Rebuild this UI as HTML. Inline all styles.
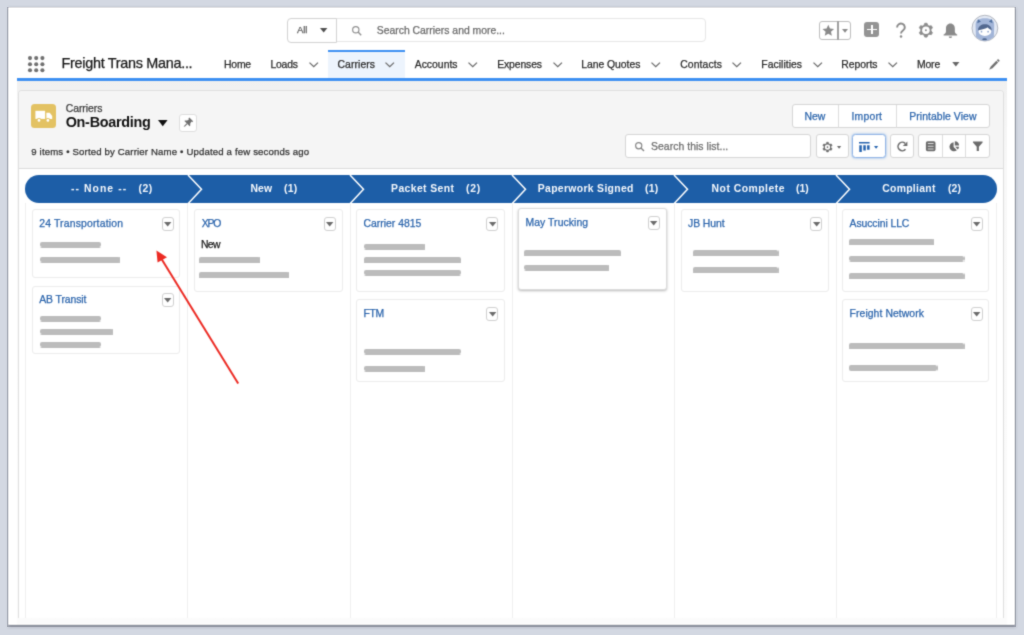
<!DOCTYPE html>
<html lang="en"><head><meta charset="utf-8"><title>Carriers | Salesforce</title>
<style>
html,body{margin:0;padding:0}
body{width:1024px;height:635px;overflow:hidden;background:#d3d8e2;font-family:"Liberation Sans",sans-serif;position:relative}
div,span,svg{box-sizing:border-box}
.t{position:absolute;white-space:nowrap;line-height:1;-webkit-text-stroke:.25px}
svg{position:absolute;overflow:visible}
.btn{background:#fff;border:1px solid #d6d6d6;border-radius:3px}
.card{background:#fff;border:1px solid #ececec;border-radius:3px}
.dd{background:#fff;border:1px solid #d0d0d0;border-radius:3px}
.bar{background:#bcbcbc;border-radius:2px;filter:url(#soft)}
.sep{background:#efefef}
#app{position:absolute;left:0;top:0;width:1024px;height:635px;filter:url(#soft)}
</style></head><body><svg width="0" height="0" style="position:absolute"><defs><filter id="soft" x="0" y="0" width="100%" height="100%" color-interpolation-filters="sRGB"><feConvolveMatrix order="3" kernelMatrix=".025 .1 .025 .1 .5 .1 .025 .1 .025" edgeMode="duplicate" preserveAlpha="true"/></filter></defs></svg><div id="app">
<div style="position:absolute;left:8px;top:7.2px;width:1007px;height:617.4px;background:#fff;box-shadow:0 1px 0 1px rgba(70,74,88,.27),0 1.500px 3px .5px rgba(58,62,74,.33)"></div>
<div style="position:absolute;left:17px;top:81px;width:990px;height:544px;background:linear-gradient(#f0f0f0,#f3f3f3 20px,#f8f8f8 90px,#fbfbfb)"></div>
<div style="position:absolute;left:336px;top:18px;width:370px;height:24px;background:#fff;border:1px solid #e6e6e6;border-radius:0 4px 4px 0"></div>
<div style="position:absolute;left:287px;top:18px;width:50px;height:24.5px;background:#fff;border:1px solid #d2d2d2;border-radius:4px 0 0 4px"></div>
<span class="t" style="left:297.00px;top:25.00px;font-size:9.6px;letter-spacing:-0.133px;color:#5e5e5e;">All</span>
<svg style="left:319.700px;top:28.100px" width="7.400" height="4.500" viewBox="0 0 7.400 4.500"><path d="M0 0h7.400L3.700 4.500z" fill="#505050"/></svg>
<svg style="left:352px;top:25.500px" width="9.600" height="9.600" viewBox="0 0 9.600 9.600"><circle cx="3.800" cy="3.800" r="3.150" fill="none" stroke="#909090" stroke-width="1.150"/><path d="M6.100 6.100L9.200 9.200" stroke="#909090" stroke-width="1.350"/></svg>
<span class="t" style="left:376.80px;top:26.00px;font-size:10.4px;letter-spacing:-0.004px;color:#6b6b6b;">Search Carriers and more...</span>
<div style="position:absolute;left:819.3px;top:20.6px;width:31.90000000000009px;height:19.0px;background:#fff;border:1px solid #bdbdbd;border-radius:3px"></div>
<div style="position:absolute;left:837px;top:20.6px;width:1.5px;height:19.0px;background:#a0a0a0"></div>
<svg style="left:822.400px;top:24px" width="12.600" height="12.600" viewBox="0 0 24 24"><path d="M12 1.5l3.2 7.2 7.8.8-5.9 5.2 1.7 7.7L12 18.4l-6.8 4 1.7-7.7L1 9.5l7.8-.8z" fill="#8a8a8a"/></svg>
<svg style="left:842px;top:28.700px" width="6" height="4" viewBox="0 0 6 4"><path d="M0 0h6L3 3.8z" fill="#8a8a8a"/></svg>
<div style="position:absolute;left:864.2px;top:21.5px;width:15.299999999999955px;height:15.5px;background:#949494;border-radius:3px"></div>
<div style="position:absolute;left:871.1px;top:24.6px;width:1.5px;height:9.299999999999997px;background:#fff"></div>
<div style="position:absolute;left:867.1px;top:28.5px;width:9.5px;height:1.5px;background:#fff"></div>
<svg style="left:896px;top:22.800px" width="10" height="15" viewBox="0 0 10 15"><path d="M1.100 4.500A3.850 3.700 0 1 1 7.200 7.300C5.700 8.400 5 9 5 10.600" fill="none" stroke="#8a8a8a" stroke-width="1.950"/><circle cx="5" cy="13.600" r="1.250" fill="#8a8a8a"/></svg>
<svg style="left:0;top:0" width="1024" height="635"><path d="M927.84 25.40L927.00 23.29L924.80 23.29L923.96 25.40L922.71 26.12L920.46 25.79L919.36 27.69L920.77 29.48L920.77 30.92L919.36 32.71L920.46 34.61L922.71 34.28L923.96 35.00L924.80 37.11L927.00 37.11L927.84 35.00L929.09 34.28L931.34 34.61L932.44 32.71L931.03 30.92L931.03 29.48L932.44 27.69L931.34 25.79L929.09 26.12z" fill="#8c8c8c" stroke="#8c8c8c" stroke-width="0.84" stroke-linejoin="round"/><circle cx="925.9" cy="30.2" r="3.78" fill="#fff"/><circle cx="925.9" cy="30.2" r="0.98" fill="#8c8c8c"/></svg>
<svg style="left:943.400px;top:22.600px" width="14.800" height="15.200" viewBox="0 0 24 24.600"><path fill="#8a8a8a" d="M12 .8C7.300.8 4.800 4.600 4.800 9v4.800c0 2.200-1.600 3.700-3.800 4.700v1.700h22v-1.700c-2.200-1-3.800-2.500-3.800-4.700V9C19.200 4.600 16.700.8 12 .8zM9.300 21.800a2.700 2.700 0 005.400 0z"/></svg>
<svg style="left:0;top:0" width="1024" height="635">
<defs><clipPath id="av"><circle cx="984.900" cy="28.150" r="12.400"/></clipPath></defs>
<circle cx="984.900" cy="28.150" r="12.900" fill="#e3e9f4" stroke="#b4b8c0" stroke-width="1"/>
<g clip-path="url(#av)">
<path d="M975.600 24.500C975.600 20.500 978.500 18.300 984.900 18.300S994.200 20.500 994.200 24.500L993.800 42H976z" fill="#a2b5d8"/>
<path d="M977.300 23.300l.6-4 3.100 2.300zM992.500 23.300l-.6-4-3.100 2.300z" fill="#50709f"/>
<ellipse cx="984.900" cy="31.400" rx="6.300" ry="4.500" fill="#fff"/>
<path d="M978 30.200C978.300 26.300 981.500 24.300 984.900 24.300S991.500 26.300 991.800 30.200C990 29.600 988.500 28.500 987.800 27.300 986 28.600 982 30 978 30.200z" fill="#52688f"/>
<circle cx="981.500" cy="31.700" r=".85" fill="#8fa5cc"/><circle cx="988.100" cy="31.700" r=".85" fill="#8fa5cc"/>
<ellipse cx="984.600" cy="39.400" rx="2.300" ry="1.200" fill="#4f678f"/>
</g></svg>
<svg style="left:0;top:0" width="1024" height="635"><g fill="#707070"><circle cx="30.0" cy="58.1" r="2.050"/><circle cx="36.2" cy="58.1" r="2.050"/><circle cx="42.4" cy="58.1" r="2.050"/><circle cx="30.0" cy="64.2" r="2.050"/><circle cx="36.2" cy="64.2" r="2.050"/><circle cx="42.4" cy="64.2" r="2.050"/><circle cx="30.0" cy="70.3" r="2.050"/><circle cx="36.2" cy="70.3" r="2.050"/><circle cx="42.4" cy="70.3" r="2.050"/></g></svg>
<span class="t" style="left:61.60px;top:56.00px;font-size:14.4px;letter-spacing:-0.288px;color:#1a1a1a;">Freight Trans Mana...</span>
<div style="position:absolute;left:327.7px;top:50px;width:77.40000000000003px;height:29px;background:#edf4fd"></div>
<div style="position:absolute;left:327.7px;top:49.6px;width:77.40000000000003px;height:2.6000000000000014px;background:#3e90f2"></div>
<div style="position:absolute;left:17px;top:78.3px;width:990px;height:2.799999999999997px;background:#3e90f2"></div>
<span class="t" style="left:224.10px;top:60.00px;font-size:10.4px;letter-spacing:-0.249px;color:#2b2b2b;">Home</span>
<span class="t" style="left:270.50px;top:60.00px;font-size:10.4px;letter-spacing:-0.235px;color:#2b2b2b;">Loads</span>
<svg style="left:308.6px;top:62px" width="9.5" height="5.5" viewBox="0 0 9.5 5.5"><path d="M.5.600l4.250 4.100L9 .6" fill="none" stroke="#6a6a6a" stroke-width="1.250"/></svg>
<span class="t" style="left:337.50px;top:60.00px;font-size:10.4px;letter-spacing:0.074px;color:#2b2b2b;">Carriers</span>
<svg style="left:385.4px;top:62px" width="9.5" height="5.5" viewBox="0 0 9.5 5.5"><path d="M.5.600l4.250 4.100L9 .6" fill="none" stroke="#6a6a6a" stroke-width="1.250"/></svg>
<span class="t" style="left:414.70px;top:60.00px;font-size:10.4px;letter-spacing:0.018px;color:#2b2b2b;">Accounts</span>
<svg style="left:468px;top:62px" width="9.5" height="5.5" viewBox="0 0 9.5 5.5"><path d="M.5.600l4.250 4.100L9 .6" fill="none" stroke="#6a6a6a" stroke-width="1.250"/></svg>
<span class="t" style="left:497.20px;top:60.00px;font-size:10.4px;letter-spacing:-0.111px;color:#2b2b2b;">Expenses</span>
<svg style="left:552.5px;top:62px" width="9.5" height="5.5" viewBox="0 0 9.5 5.5"><path d="M.5.600l4.250 4.100L9 .6" fill="none" stroke="#6a6a6a" stroke-width="1.250"/></svg>
<span class="t" style="left:581.20px;top:60.00px;font-size:10.4px;letter-spacing:-0.026px;color:#2b2b2b;">Lane Quotes</span>
<svg style="left:650.9px;top:62px" width="9.5" height="5.5" viewBox="0 0 9.5 5.5"><path d="M.5.600l4.250 4.100L9 .6" fill="none" stroke="#6a6a6a" stroke-width="1.250"/></svg>
<span class="t" style="left:680.20px;top:60.00px;font-size:10.4px;letter-spacing:0.109px;color:#2b2b2b;">Contacts</span>
<svg style="left:732.4px;top:62px" width="9.5" height="5.5" viewBox="0 0 9.5 5.5"><path d="M.5.600l4.250 4.100L9 .6" fill="none" stroke="#6a6a6a" stroke-width="1.250"/></svg>
<span class="t" style="left:761.30px;top:60.00px;font-size:10.4px;letter-spacing:0.038px;color:#2b2b2b;">Facilities</span>
<svg style="left:812.5px;top:62px" width="9.5" height="5.5" viewBox="0 0 9.5 5.5"><path d="M.5.600l4.250 4.100L9 .6" fill="none" stroke="#6a6a6a" stroke-width="1.250"/></svg>
<span class="t" style="left:841.20px;top:60.00px;font-size:10.4px;letter-spacing:-0.018px;color:#2b2b2b;">Reports</span>
<svg style="left:888.2px;top:62px" width="9.5" height="5.5" viewBox="0 0 9.5 5.5"><path d="M.5.600l4.250 4.100L9 .6" fill="none" stroke="#6a6a6a" stroke-width="1.250"/></svg>
<span class="t" style="left:916.90px;top:60.00px;font-size:10.4px;letter-spacing:-0.130px;color:#2b2b2b;">More</span>
<svg style="left:951.9px;top:62px" width="7.7" height="4.500" viewBox="0 0 8 5"><path d="M0 0h8L4 5z" fill="#666"/></svg>
<svg style="left:0;top:0" width="1024" height="635"><g transform="translate(993.900 65) rotate(45)" fill="#737373"><path d="M-1.250 -7.100h2.500v1.700h-2.500zM-1.250 -4.700h2.500v7.900L0 6.800l-1.250-3.600z"/></g></svg>
<div style="position:absolute;left:17.7px;top:90.3px;width:986.0px;height:527.7px;background:#fff;border:1px solid #dfdfdf;border-bottom:none;border-radius:4px 4px 0 0"></div>
<div style="position:absolute;left:18.7px;top:91.3px;width:984.0px;height:76.50000000000001px;background:#f5f5f5;border-radius:3px 3px 0 0"></div>
<div style="position:absolute;left:18.7px;top:167.6px;width:984.0px;height:1.0px;background:#dcdcdc"></div>
<div style="position:absolute;left:31px;top:103.7px;width:25.1px;height:24.60000000000001px;background:#e3c263;border-radius:3.500px"></div>
<svg style="left:0;top:0" width="1024" height="635"><g fill="#fff">
<path d="M35.400 110.800h9.700v8.100h-9.700z"/><path d="M46.400 112.700h3.300l2.500 3.200v3h-5.800z"/>
<circle cx="39" cy="120.300" r="2.300" fill="#e3c263"/><circle cx="39" cy="120.400" r="1.350"/>
<circle cx="47.900" cy="120.300" r="2.300" fill="#e3c263"/><circle cx="47.900" cy="120.400" r="1.350"/>
</g></svg>
<span class="t" style="left:65.70px;top:104.00px;font-size:10.4px;letter-spacing:-0.026px;color:#3c3c3c;">Carriers</span>
<span class="t" style="left:65.70px;top:115.00px;font-size:14.4px;letter-spacing:-0.278px;color:#111;font-weight:bold;-webkit-text-stroke:0;">On-Boarding</span>
<svg style="left:158px;top:119.700px" width="9.600" height="6.200" viewBox="0 0 9.600 6.200"><path d="M0 0h9.600L4.800 6.200z" fill="#111"/></svg>
<div class="btn" style="position:absolute;left:178.6px;top:113.9px;width:18.200000000000017px;height:18.19999999999999px;border-color:#dedede"></div>
<svg style="left:0;top:0" width="1024" height="635"><g transform="translate(188 122.700) rotate(45) scale(.86)" fill="#707070"><path d="M-3.100 -5.300h6.200v1.500h-1.100l.5 2.600 1.800 1.900v.9h-8.600v-.9l1.800-1.900.5-2.600h-1.100z"/><path d="M-.65 1.600h1.300v3.500l-.65 2.100-.65-2.100z"/></g></svg>
<span class="t" style="left:31.30px;top:147.00px;font-size:9.6px;letter-spacing:0.157px;color:#333;">9 items • Sorted by Carrier Name • Updated a few seconds ago</span>
<div class="btn" style="position:absolute;left:791.5px;top:103.7px;width:198.5px;height:24.499999999999986px;"></div>
<div style="position:absolute;left:838px;top:104.5px;width:1px;height:23.0px;background:#dcdcdc"></div>
<div style="position:absolute;left:896px;top:104.5px;width:1px;height:23.0px;background:#dcdcdc"></div>
<span class="t" style="left:804.60px;top:112.00px;font-size:10.4px;letter-spacing:-0.066px;color:#2c65ac;">New</span>
<span class="t" style="left:851.50px;top:112.00px;font-size:10.4px;letter-spacing:0.205px;color:#2c65ac;">Import</span>
<span class="t" style="left:909.30px;top:112.00px;font-size:10.4px;letter-spacing:0.068px;color:#2c65ac;">Printable View</span>
<div class="btn" style="position:absolute;left:625.3px;top:134.2px;width:186.20000000000005px;height:24.200000000000017px;"></div>
<svg style="left:635.200px;top:141.600px" width="9.400" height="9.400" viewBox="0 0 9.600 9.600"><circle cx="3.800" cy="3.800" r="3.150" fill="none" stroke="#868686" stroke-width="1.200"/><path d="M6.100 6.100L9.200 9.200" stroke="#868686" stroke-width="1.400"/></svg>
<span class="t" style="left:651.00px;top:142.00px;font-size:10.4px;letter-spacing:0.056px;color:#6e6e6e;">Search this list...</span>
<div class="btn" style="position:absolute;left:815.6px;top:134.3px;width:33.0px;height:23.899999999999977px;"></div>
<svg style="left:0;top:0" width="1024" height="635"><path d="M828.82 143.83L828.27 142.26L826.73 142.26L826.18 143.83L825.33 144.32L823.69 144.02L822.93 145.34L824.01 146.61L824.01 147.59L822.93 148.86L823.69 150.18L825.33 149.88L826.18 150.37L826.73 151.94L828.27 151.94L828.82 150.37L829.67 149.88L831.31 150.18L832.07 148.86L830.99 147.59L830.99 146.61L832.07 145.34L831.31 144.02L829.67 144.32z" fill="#6b6b6b" stroke="#6b6b6b" stroke-width="0.59" stroke-linejoin="round"/><circle cx="827.5" cy="147.1" r="2.65" fill="#fff"/><circle cx="827.5" cy="147.1" r="0.88" fill="#6b6b6b"/></svg>
<svg style="left:837.100px;top:145.700px" width="4.200" height="2.700" viewBox="0 0 4.200 2.700"><path d="M0 0h4.200L2.100 2.700z" fill="#6b6b6b"/></svg>
<div style="position:absolute;left:852.3px;top:134px;width:33.700000000000045px;height:24.400000000000006px;background:#fff;border:1px solid #92b5e6;border-radius:3.500px;box-shadow:0 0 2.500px rgba(80,145,225,.7)"></div>
<svg style="left:0;top:0" width="1024" height="635"><path fill="#2462ae" d="M859 141.900h10.600v1.700H859zM859.300 145.200h2.500v6.800h-2.500zM863.300 145.200h2.500v5.300h-2.500zM867.100 145.200h2.500v4.500h-2.500z"/></svg>
<svg style="left:874.300px;top:145.700px" width="4.200" height="2.700" viewBox="0 0 4.200 2.700"><path d="M0 0h4.200L2.100 2.700z" fill="#2462ae"/></svg>
<div class="btn" style="position:absolute;left:890.1px;top:134.3px;width:23.899999999999977px;height:23.899999999999977px;"></div>
<svg style="left:0;top:0" width="1024" height="635"><path d="M905.500 149.300A4.250 4.250 0 1 1 905.100 143.300" fill="none" stroke="#6b6b6b" stroke-width="1.600"/><path d="M907.400 141.400v4.600h-4.600z" fill="#6b6b6b"/></svg>
<div class="btn" style="position:absolute;left:917.6px;top:134.3px;width:72.10000000000002px;height:23.899999999999977px;"></div>
<div style="position:absolute;left:941.6px;top:135px;width:1.0px;height:22.5px;background:#dcdcdc"></div>
<div style="position:absolute;left:965.4px;top:135px;width:1.0px;height:22.5px;background:#dcdcdc"></div>
<svg style="left:0;top:0" width="1024" height="635"><rect x="925.900" y="141.300" width="9.600" height="9.900" rx="1.600" fill="#6b6b6b"/><path d="M927.800 143h5.800v1.100h-5.800zM927.800 145.700h5.800v1.100h-5.800zM927.800 148.400h5.800v1.100h-5.800z" fill="#dcdcdc"/></svg>
<svg style="left:0;top:0" width="1024" height="635"><g fill="#6b6b6b"><path d="M953.600 142.300v4.700l3.300 3.200A4.500 4.500 0 1 1 953.600 142.300z"/><path d="M954.800 141.300a4.500 4.500 0 0 1 4.300 4.300h-4.300z"/><path d="M955.200 146.800h3.900a4.500 4.500 0 0 1 -1.300 2.700z"/></g></svg>
<svg style="left:0;top:0" width="1024" height="635"><path d="M973 141.500h9.600v1l-3.700 4.200v4.200h-2.200v-4.200l-3.700-4.200z" fill="#6b6b6b"/></svg>
<div class="sep" style="position:absolute;left:25px;top:203px;width:1px;height:415px;"></div>
<div class="sep" style="position:absolute;left:187.2px;top:203px;width:1.0px;height:415px;"></div>
<div class="sep" style="position:absolute;left:349.5px;top:203px;width:1.0px;height:415px;"></div>
<div class="sep" style="position:absolute;left:511.7px;top:203px;width:1.0000000000000568px;height:415px;"></div>
<div class="sep" style="position:absolute;left:674px;top:203px;width:1px;height:415px;"></div>
<div class="sep" style="position:absolute;left:836px;top:203px;width:1px;height:415px;"></div>
<div class="sep" style="position:absolute;left:996px;top:203px;width:1px;height:415px;"></div>
<div style="position:absolute;left:24.5px;top:175px;width:972.2px;height:27.69999999999999px;background:#1d5ea7;border-radius:14px"></div>
<svg style="left:186.7px;top:174.500px" width="16" height="28.700" viewBox="0 0 16 28.700"><path d="M1 0L14.500 14.350 1 28.700" fill="none" stroke="#fff" stroke-width="1.500"/></svg>
<svg style="left:349px;top:174.500px" width="16" height="28.700" viewBox="0 0 16 28.700"><path d="M1 0L14.500 14.350 1 28.700" fill="none" stroke="#fff" stroke-width="1.500"/></svg>
<svg style="left:511.1px;top:174.500px" width="16" height="28.700" viewBox="0 0 16 28.700"><path d="M1 0L14.500 14.350 1 28.700" fill="none" stroke="#fff" stroke-width="1.500"/></svg>
<svg style="left:673.4px;top:174.500px" width="16" height="28.700" viewBox="0 0 16 28.700"><path d="M1 0L14.500 14.350 1 28.700" fill="none" stroke="#fff" stroke-width="1.500"/></svg>
<svg style="left:835.3px;top:174.500px" width="16" height="28.700" viewBox="0 0 16 28.700"><path d="M1 0L14.500 14.350 1 28.700" fill="none" stroke="#fff" stroke-width="1.500"/></svg>
<span class="t" style="left:70.90px;top:184.00px;font-size:10.4px;letter-spacing:1.074px;color:#f4f7fb;font-weight:bold;-webkit-text-stroke:0;">-- None --</span>
<span class="t" style="left:138.50px;top:184.00px;font-size:10.4px;letter-spacing:0.496px;color:#f4f7fb;font-weight:bold;-webkit-text-stroke:0;">(2)</span>
<span class="t" style="left:250.50px;top:184.00px;font-size:10.4px;letter-spacing:0.048px;color:#f4f7fb;font-weight:bold;-webkit-text-stroke:0;">New</span>
<span class="t" style="left:284.00px;top:184.00px;font-size:10.4px;letter-spacing:0.196px;color:#f4f7fb;font-weight:bold;-webkit-text-stroke:0;">(1)</span>
<span class="t" style="left:391.10px;top:184.00px;font-size:10.4px;letter-spacing:0.394px;color:#f4f7fb;font-weight:bold;-webkit-text-stroke:0;">Packet Sent</span>
<span class="t" style="left:466.00px;top:184.00px;font-size:10.4px;letter-spacing:0.796px;color:#f4f7fb;font-weight:bold;-webkit-text-stroke:0;">(2)</span>
<span class="t" style="left:537.80px;top:184.00px;font-size:10.4px;letter-spacing:0.331px;color:#f4f7fb;font-weight:bold;-webkit-text-stroke:0;">Paperwork Signed</span>
<span class="t" style="left:645.00px;top:184.00px;font-size:10.4px;letter-spacing:0.246px;color:#f4f7fb;font-weight:bold;-webkit-text-stroke:0;">(1)</span>
<span class="t" style="left:711.60px;top:184.00px;font-size:10.4px;letter-spacing:0.482px;color:#f4f7fb;font-weight:bold;-webkit-text-stroke:0;">Not Complete</span>
<span class="t" style="left:796.00px;top:184.00px;font-size:10.4px;letter-spacing:-0.054px;color:#f4f7fb;font-weight:bold;-webkit-text-stroke:0;">(1)</span>
<span class="t" style="left:882.20px;top:184.00px;font-size:10.4px;letter-spacing:0.307px;color:#f4f7fb;font-weight:bold;-webkit-text-stroke:0;">Compliant</span>
<span class="t" style="left:948.00px;top:184.00px;font-size:10.4px;letter-spacing:0.146px;color:#f4f7fb;font-weight:bold;-webkit-text-stroke:0;">(2)</span>
<div class="card" style="position:absolute;left:31.8px;top:209.4px;width:148.5px;height:68.29999999999998px;"></div>
<span class="t" style="left:39.20px;top:219.00px;font-size:10.4px;letter-spacing:0.179px;color:#2c65ac;">24 Transportation</span>
<div class="dd" style="position:absolute;left:161.5px;top:216.6px;width:12.199999999999989px;height:14.0px;"></div>
<svg style="left:163.9px;top:222.2px" width="7.400" height="4.400" viewBox="0 0 7.400 4.400"><path d="M0 0h7.400L3.700 4.400z" fill="#6c6c6c"/></svg>
<div class="bar" style="position:absolute;left:40.4px;top:241.6px;width:61.00000000000001px;height:5.5px;"></div>
<div class="bar" style="position:absolute;left:40.4px;top:256.8px;width:79.9px;height:5.699999999999989px;"></div>
<div class="card" style="position:absolute;left:31.8px;top:285.5px;width:148.5px;height:68.69999999999999px;"></div>
<span class="t" style="left:39.20px;top:295.00px;font-size:10.4px;letter-spacing:-0.075px;color:#2c65ac;">AB Transit</span>
<div class="dd" style="position:absolute;left:161.5px;top:292.7px;width:12.199999999999989px;height:14.0px;"></div>
<svg style="left:163.9px;top:298.3px" width="7.400" height="4.400" viewBox="0 0 7.400 4.400"><path d="M0 0h7.400L3.700 4.400z" fill="#6c6c6c"/></svg>
<div class="bar" style="position:absolute;left:40.4px;top:315.9px;width:61.00000000000001px;height:5.300000000000011px;"></div>
<div class="bar" style="position:absolute;left:40.4px;top:328.7px;width:72.6px;height:5.300000000000011px;"></div>
<div class="bar" style="position:absolute;left:40.4px;top:341.6px;width:61.00000000000001px;height:5.2999999999999545px;"></div>
<div class="card" style="position:absolute;left:194.3px;top:209.4px;width:148.3px;height:82.4px;"></div>
<span class="t" style="left:201.70px;top:219.00px;font-size:10.4px;letter-spacing:-1.182px;color:#2c65ac;">XPO</span>
<div class="dd" style="position:absolute;left:323.8px;top:216.6px;width:12.199999999999989px;height:14.0px;"></div>
<svg style="left:326.2px;top:222.2px" width="7.400" height="4.400" viewBox="0 0 7.400 4.400"><path d="M0 0h7.400L3.700 4.400z" fill="#6c6c6c"/></svg>
<div class="bar" style="position:absolute;left:199.3px;top:257.4px;width:60.5px;height:5.300000000000011px;"></div>
<div class="bar" style="position:absolute;left:199.3px;top:272.4px;width:89.5px;height:5.300000000000011px;"></div>
<span class="t" style="left:200.90px;top:240.00px;font-size:10.4px;letter-spacing:-0.616px;color:#1a1a1a;">New</span>
<div class="card" style="position:absolute;left:356px;top:209.4px;width:149px;height:82.4px;"></div>
<span class="t" style="left:363.40px;top:219.00px;font-size:10.4px;letter-spacing:0.018px;color:#2c65ac;">Carrier 4815</span>
<div class="dd" style="position:absolute;left:486.2px;top:216.6px;width:12.199999999999989px;height:14.0px;"></div>
<svg style="left:488.6px;top:222.2px" width="7.400" height="4.400" viewBox="0 0 7.400 4.400"><path d="M0 0h7.400L3.700 4.400z" fill="#6c6c6c"/></svg>
<div class="bar" style="position:absolute;left:364.4px;top:243.7px;width:60.700000000000045px;height:5.300000000000011px;"></div>
<div class="bar" style="position:absolute;left:364.4px;top:257.4px;width:97.0px;height:5.300000000000011px;"></div>
<div class="bar" style="position:absolute;left:364.4px;top:270px;width:97.0px;height:5.300000000000011px;"></div>
<div class="card" style="position:absolute;left:356px;top:299.3px;width:149px;height:82.69999999999999px;"></div>
<span class="t" style="left:363.40px;top:309.00px;font-size:10.4px;letter-spacing:-0.336px;color:#2c65ac;">FTM</span>
<div class="dd" style="position:absolute;left:486.2px;top:306.5px;width:12.199999999999989px;height:14.0px;"></div>
<svg style="left:488.6px;top:312.1px" width="7.400" height="4.400" viewBox="0 0 7.400 4.400"><path d="M0 0h7.400L3.700 4.400z" fill="#6c6c6c"/></svg>
<div class="bar" style="position:absolute;left:364.4px;top:348.5px;width:97.0px;height:5.300000000000011px;"></div>
<div class="bar" style="position:absolute;left:364.4px;top:365.6px;width:60.700000000000045px;height:5.5px;"></div>
<div class="card" style="position:absolute;left:518px;top:208.3px;width:148.79999999999995px;height:82.09999999999997px;box-shadow:0 1px 2.500px rgba(0,0,0,.28);border-color:#dcdcdc"></div>
<span class="t" style="left:525.40px;top:218.00px;font-size:10.4px;letter-spacing:0.087px;color:#2c65ac;">May Trucking</span>
<div class="dd" style="position:absolute;left:648.0px;top:215.5px;width:12.200000000000045px;height:14.0px;"></div>
<svg style="left:650.4px;top:221.1px" width="7.400" height="4.400" viewBox="0 0 7.400 4.400"><path d="M0 0h7.400L3.700 4.400z" fill="#6c6c6c"/></svg>
<div class="bar" style="position:absolute;left:524.4px;top:250.1px;width:97.0px;height:5.599999999999994px;"></div>
<div class="bar" style="position:absolute;left:524.4px;top:265px;width:84.70000000000005px;height:5.300000000000011px;"></div>
<div class="card" style="position:absolute;left:680.6px;top:209.4px;width:148.29999999999995px;height:82.4px;"></div>
<span class="t" style="left:688.00px;top:219.00px;font-size:10.4px;letter-spacing:-0.049px;color:#2c65ac;">JB Hunt</span>
<div class="dd" style="position:absolute;left:810.1px;top:216.6px;width:12.200000000000045px;height:14.0px;"></div>
<svg style="left:812.5px;top:222.2px" width="7.400" height="4.400" viewBox="0 0 7.400 4.400"><path d="M0 0h7.400L3.700 4.400z" fill="#6c6c6c"/></svg>
<div class="bar" style="position:absolute;left:693.2px;top:250.1px;width:85.19999999999993px;height:5.599999999999994px;"></div>
<div class="bar" style="position:absolute;left:693.2px;top:267px;width:85.19999999999993px;height:5.600000000000023px;"></div>
<div class="card" style="position:absolute;left:842.2px;top:209.4px;width:147.19999999999993px;height:82.4px;"></div>
<span class="t" style="left:849.60px;top:219.00px;font-size:10.4px;letter-spacing:-0.081px;color:#2c65ac;">Asuccini LLC</span>
<div class="dd" style="position:absolute;left:970.6px;top:216.6px;width:12.200000000000045px;height:14.0px;"></div>
<svg style="left:973.0px;top:222.2px" width="7.400" height="4.400" viewBox="0 0 7.400 4.400"><path d="M0 0h7.400L3.700 4.400z" fill="#6c6c6c"/></svg>
<div class="bar" style="position:absolute;left:849px;top:239.3px;width:84.89999999999998px;height:5.5px;"></div>
<div class="bar" style="position:absolute;left:849px;top:256.1px;width:115.29999999999995px;height:5.399999999999977px;"></div>
<div class="bar" style="position:absolute;left:849px;top:273.3px;width:115.29999999999995px;height:5.599999999999966px;"></div>
<div class="card" style="position:absolute;left:842.2px;top:299.3px;width:147.19999999999993px;height:82.69999999999999px;"></div>
<span class="t" style="left:849.60px;top:309.00px;font-size:10.4px;letter-spacing:0.070px;color:#2c65ac;">Freight Network</span>
<div class="dd" style="position:absolute;left:970.6px;top:306.5px;width:12.200000000000045px;height:14.0px;"></div>
<svg style="left:973.0px;top:312.1px" width="7.400" height="4.400" viewBox="0 0 7.400 4.400"><path d="M0 0h7.400L3.700 4.400z" fill="#6c6c6c"/></svg>
<div class="bar" style="position:absolute;left:849px;top:343.4px;width:115.29999999999995px;height:5.800000000000011px;"></div>
<div class="bar" style="position:absolute;left:849px;top:365.1px;width:88.10000000000002px;height:6.0px;"></div>
<svg style="left:0;top:0" width="1024" height="635" viewBox="0 0 1024 635"><path d="M238.200 383.600L160.300 257" stroke="#ec2b24" stroke-width="2" fill="none"/><path d="M156.400 250.600L167 257.200 157.600 262.600z" fill="#ec2b24"/></svg>
</div></body></html>
